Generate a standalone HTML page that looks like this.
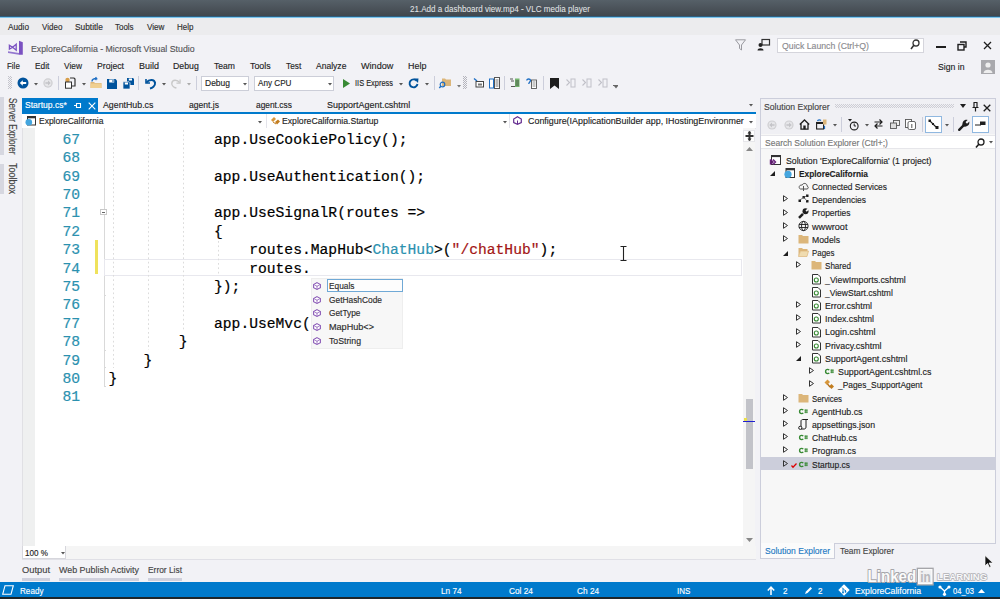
<!DOCTYPE html>
<html><head><meta charset="utf-8"><style>
html,body{margin:0;padding:0;width:1000px;height:599px;overflow:hidden;background:#f2f2f6}
body>div,body>span,body>svg,div>div,div>span{position:absolute}
.t{position:absolute;white-space:pre;font-family:"Liberation Sans",sans-serif;-webkit-text-stroke:0.15px currentColor}
.m{position:absolute;white-space:pre;font-family:"Liberation Mono",monospace;font-size:14.667px;line-height:16px;-webkit-text-stroke:0.2px currentColor}
svg{position:absolute;overflow:visible}
</style></head><body>
<div style="left:0;top:0;width:1000px;height:16px;background:linear-gradient(#566068,#41474d)"></div>
<div style="left:0px;top:16px;width:1000px;height:1px;background:#2f5f80;"></div>
<div style="left:0px;top:17px;width:1000px;height:1px;background:#7cc6ee;"></div>
<div style="left:0px;top:18px;width:1000px;height:17px;background:#ececee;"></div>
<span class="t" style="left:409.60px;top:5px;font-size:8.8px;line-height:8.8px;color:#e2e4e6;transform:scaleX(0.918);transform-origin:0 0;-webkit-text-stroke:0.05px #e2e4e6">21.Add a dashboard view.mp4 - VLC media player</span>
<span class="t" style="left:8.00px;top:23px;font-size:8.6px;line-height:8.6px;color:#2e2e2e;transform:scaleX(0.955);transform-origin:0 0;">Audio</span>
<span class="t" style="left:41.60px;top:23px;font-size:8.6px;line-height:8.6px;color:#2e2e2e;transform:scaleX(0.934);transform-origin:0 0;">Video</span>
<span class="t" style="left:74.60px;top:23px;font-size:8.6px;line-height:8.6px;color:#2e2e2e;transform:scaleX(0.969);transform-origin:0 0;">Subtitle</span>
<span class="t" style="left:115.00px;top:23px;font-size:8.6px;line-height:8.6px;color:#2e2e2e;transform:scaleX(0.927);transform-origin:0 0;">Tools</span>
<span class="t" style="left:146.60px;top:23px;font-size:8.6px;line-height:8.6px;color:#2e2e2e;transform:scaleX(0.940);transform-origin:0 0;">View</span>
<span class="t" style="left:176.60px;top:23px;font-size:8.6px;line-height:8.6px;color:#2e2e2e;transform:scaleX(0.927);transform-origin:0 0;">Help</span>
<div style="left:0px;top:35px;width:1000px;height:547px;background:#f2f2f6;"></div>
<svg style="left:7px;top:40px" width="17" height="16" viewBox="0 0 17 16"><path d="M12 0.8 L15.8 2.2 V14.8 H12 Z" fill="#7b52c2"/><path d="M1 11.2 L12 12.9 V14.8 L1 12.9 Z" fill="#9478d0"/><path d="M2.4 5.2 L5.6 7.2 L2.4 9.2 Z M9.2 4.2 L5.6 7.2 L9.2 10.2 Z" fill="none" stroke="#7b52c2" stroke-width="1.3" stroke-linejoin="miter"/></svg>
<span class="t" style="left:31.40px;top:44px;font-size:9.8px;line-height:9.8px;color:#555558;transform:scaleX(0.895);transform-origin:0 0;">ExploreCalifornia - Microsoft Visual Studio</span>
<svg style="left:735px;top:39px" width="11" height="12" viewBox="0 0 11 12"><path d="M0.5 0.8 H10.5 L6.5 6 V11 L4.5 9.5 V6 Z" fill="none" stroke="#9a9aa0" stroke-width="1"/></svg>
<svg style="left:757px;top:39px" width="13" height="12" viewBox="0 0 13 12"><rect x="5" y="0.5" width="7.5" height="5.5" fill="none" stroke="#333" stroke-width="1.2"/><circle cx="3.5" cy="6" r="2" fill="#222"/><path d="M0.5 11.5 C0.5 8.5 6.5 8.5 6.5 11.5Z" fill="#222"/></svg>
<div style="left:776.5px;top:37.5px;width:147px;height:15.5px;background:#fff;border:1px solid #d5d5dc;box-sizing:border-box"></div>
<span class="t" style="left:782.00px;top:41px;font-size:9.8px;line-height:9.8px;color:#8a8a8e;transform:scaleX(0.890);transform-origin:0 0;">Quick Launch (Ctrl+Q)</span>
<svg style="left:910px;top:39px" width="10" height="11" viewBox="0 0 10 11"><circle cx="6" cy="4" r="3" fill="none" stroke="#333" stroke-width="1.3"/><path d="M4 6 L1 10" stroke="#333" stroke-width="1.6"/></svg>
<div style="left:935.5px;top:46px;width:10px;height:2.2px;background:#1e1e1e;"></div>
<svg style="left:957px;top:41px" width="10" height="10" viewBox="0 0 10 10"><path d="M3 1 H9 V6 H7" fill="none" stroke="#1e1e1e" stroke-width="1.4"/><rect x="1" y="3.5" width="6" height="5.5" fill="none" stroke="#1e1e1e" stroke-width="1.4"/></svg>
<svg style="left:983px;top:41px" width="9" height="9" viewBox="0 0 9 9"><path d="M1 1 L8 8 M8 1 L1 8" stroke="#1e1e1e" stroke-width="1.3"/></svg>
<span class="t" style="left:6.80px;top:61px;font-size:9.8px;line-height:9.8px;color:#1e1e1e;transform:scaleX(0.811);transform-origin:0 0;">File</span>
<span class="t" style="left:34.60px;top:61px;font-size:9.8px;line-height:9.8px;color:#1e1e1e;transform:scaleX(0.853);transform-origin:0 0;">Edit</span>
<span class="t" style="left:64.00px;top:61px;font-size:9.8px;line-height:9.8px;color:#1e1e1e;transform:scaleX(0.854);transform-origin:0 0;">View</span>
<span class="t" style="left:97.00px;top:61px;font-size:9.8px;line-height:9.8px;color:#1e1e1e;transform:scaleX(0.885);transform-origin:0 0;">Project</span>
<span class="t" style="left:139.00px;top:61px;font-size:9.8px;line-height:9.8px;color:#1e1e1e;transform:scaleX(0.918);transform-origin:0 0;">Build</span>
<span class="t" style="left:173.40px;top:61px;font-size:9.8px;line-height:9.8px;color:#1e1e1e;transform:scaleX(0.893);transform-origin:0 0;">Debug</span>
<span class="t" style="left:214.00px;top:61px;font-size:9.8px;line-height:9.8px;color:#1e1e1e;transform:scaleX(0.876);transform-origin:0 0;">Team</span>
<span class="t" style="left:250.40px;top:61px;font-size:9.8px;line-height:9.8px;color:#1e1e1e;transform:scaleX(0.901);transform-origin:0 0;">Tools</span>
<span class="t" style="left:285.80px;top:61px;font-size:9.8px;line-height:9.8px;color:#1e1e1e;transform:scaleX(0.846);transform-origin:0 0;">Test</span>
<span class="t" style="left:315.60px;top:61px;font-size:9.8px;line-height:9.8px;color:#1e1e1e;transform:scaleX(0.872);transform-origin:0 0;">Analyze</span>
<span class="t" style="left:360.60px;top:61px;font-size:9.8px;line-height:9.8px;color:#1e1e1e;transform:scaleX(0.929);transform-origin:0 0;">Window</span>
<span class="t" style="left:407.60px;top:61px;font-size:9.8px;line-height:9.8px;color:#1e1e1e;transform:scaleX(0.913);transform-origin:0 0;">Help</span>
<span class="t" style="left:937.50px;top:62px;font-size:9.8px;line-height:9.8px;color:#1e1e1e;transform:scaleX(0.884);transform-origin:0 0;">Sign in</span>
<svg style="left:981px;top:60px" width="14" height="14" viewBox="0 0 14 14"><rect width="14" height="14" fill="#a9a9ad"/><circle cx="7" cy="5" r="2.6" fill="#eee"/><path d="M2.5 13 C2.5 8.5 11.5 8.5 11.5 13Z" fill="#eee"/></svg>
<svg style="left:8px;top:76px" width="4" height="13" viewBox="0 0 4 13"><path d="M0 0h1v1h-1zM2 0h1v1h-1zM1 1h1v1h-1zM3 1h1v1h-1zM0 2h1v1h-1zM2 2h1v1h-1zM1 3h1v1h-1zM3 3h1v1h-1zM0 4h1v1h-1zM2 4h1v1h-1zM1 5h1v1h-1zM3 5h1v1h-1zM0 6h1v1h-1zM2 6h1v1h-1zM1 7h1v1h-1zM3 7h1v1h-1zM0 8h1v1h-1zM2 8h1v1h-1zM1 9h1v1h-1zM3 9h1v1h-1zM0 10h1v1h-1zM2 10h1v1h-1zM1 11h1v1h-1zM3 11h1v1h-1zM0 12h1v1h-1zM2 12h1v1h-1z" fill="#c4c4cc"/></svg>
<svg style="left:17px;top:77px" width="12" height="12" viewBox="0 0 12 12"><circle cx="6" cy="6" r="5.5" fill="#00539c"/><path d="M2.8 6 L5.8 3.2 V5 H9.2 V7 H5.8 V8.8Z" fill="#fff"/></svg>
<svg style="left:33.5px;top:82.8px" width="4" height="2.4" viewBox="0 0 4 2.4"><path d="M0 0H4L2 2.4Z" fill="#555"/></svg>
<svg style="left:42.5px;top:78px" width="10" height="10" viewBox="0 0 10 10"><circle cx="5" cy="5" r="4.7" fill="#cfcfd2"/><circle cx="5" cy="5" r="3.4" fill="#e6e6e9"/><path d="M7.7 5L5 2.6V4.2H2.4V5.8H5V7.4Z" fill="#c4c4c8"/></svg>
<div style="left:58px;top:76px;width:1px;height:14px;background:#cccedb;"></div>
<svg style="left:64px;top:77px" width="12" height="12" viewBox="0 0 12 12"><circle cx="3.5" cy="3" r="2.2" fill="#d89e4a"/><rect x="1.5" y="5" width="6" height="6.2" fill="#fff" stroke="#333" stroke-width="1"/><path d="M6 1 H10 L11 2 V9 H8" fill="none" stroke="#333" stroke-width="1.2"/></svg>
<svg style="left:81.5px;top:82.8px" width="4" height="2.4" viewBox="0 0 4 2.4"><path d="M0 0H4L2 2.4Z" fill="#555"/></svg>
<svg style="left:90px;top:77px" width="12" height="12" viewBox="0 0 12 12"><path d="M0.5 5 H4 L5 6 H11.5 V11 H0.5Z" fill="#dcb67a"/><path d="M0.5 6.5 H11.5 V11 H0.5Z" fill="#f0cf90"/><path d="M2 4.5 C2 2 4 1.5 6.5 1.5 L5.5 0.2 M6.5 1.5 L5.5 3" fill="none" stroke="#1f6fc4" stroke-width="1.4"/></svg>
<svg style="left:107px;top:78.5px" width="10" height="10" viewBox="0 0 10 10"><path d="M0 0 H8.5 L10 1.5 V10 H0Z" fill="#00539c"/><rect x="2.2" y="0.5" width="5" height="3" fill="#fff"/><rect x="5.5" y="1" width="1" height="2" fill="#00539c"/><rect x="2" y="6.5" width="6" height="3.5" fill="#00539c"/></svg>
<svg style="left:122.5px;top:77.5px" width="11" height="11" viewBox="0 0 11 11"><path d="M4 0 H10 L11 1 V7 H4Z" fill="#00539c"/><rect x="5.8" y="0.5" width="3.2" height="2" fill="#fff"/><path d="M0 3.8 H6 L7 4.8 V11 H0Z" fill="#00539c" stroke="#f2f2f6" stroke-width="0.7"/><rect x="1.8" y="4.5" width="3.2" height="2" fill="#fff"/></svg>
<div style="left:138px;top:76px;width:1px;height:14px;background:#cccedb;"></div>
<svg style="left:144.5px;top:77.5px" width="12" height="11" viewBox="0 0 12 11"><path d="M1 1 V5 H5" fill="none" stroke="#00539c" stroke-width="1.6"/><path d="M1.5 4.5 C4 1 9.5 1 10 5 C10.5 8 7 10 5 10.5" fill="none" stroke="#00539c" stroke-width="2"/></svg>
<svg style="left:161.5px;top:82.8px" width="4" height="2.4" viewBox="0 0 4 2.4"><path d="M0 0H4L2 2.4Z" fill="#555"/></svg>
<svg style="left:170px;top:77.5px" width="11" height="11" viewBox="0 0 12 11"><path d="M11 1 V5 H7" fill="none" stroke="#c8c8c8" stroke-width="1.4"/><path d="M10.5 4.5 C8 1 2.5 1 2 5 C1.5 8 5 10 7 10.5" fill="none" stroke="#c8c8c8" stroke-width="1.6"/></svg>
<svg style="left:186.5px;top:82.8px" width="4" height="2.4" viewBox="0 0 4 2.4"><path d="M0 0H4L2 2.4Z" fill="#aaa"/></svg>
<div style="left:196px;top:76px;width:1px;height:14px;background:#cccedb;"></div>
<div style="left:201.4px;top:75.6px;width:48px;height:15.4px;background:#fff;border:1px solid #ccced8;box-sizing:border-box"></div>
<span class="t" style="left:205.00px;top:78px;font-size:9.8px;line-height:9.8px;color:#1e1e1e;transform:scaleX(0.866);transform-origin:0 0;">Debug</span>
<svg style="left:242.5px;top:82.8px" width="4" height="2.4" viewBox="0 0 4 2.4"><path d="M0 0H4L2 2.4Z" fill="#555"/></svg>
<div style="left:254px;top:75.6px;width:80.4px;height:15.4px;background:#fff;border:1px solid #ccced8;box-sizing:border-box"></div>
<span class="t" style="left:257.50px;top:78px;font-size:9.8px;line-height:9.8px;color:#1e1e1e;transform:scaleX(0.831);transform-origin:0 0;">Any CPU</span>
<svg style="left:327.5px;top:82.8px" width="4" height="2.4" viewBox="0 0 4 2.4"><path d="M0 0H4L2 2.4Z" fill="#555"/></svg>
<svg style="left:342.5px;top:78.5px" width="7" height="9" viewBox="0 0 7 9"><path d="M0 0 L7 4.5 L0 9Z" fill="#388a34"/></svg>
<span class="t" style="left:355.00px;top:78px;font-size:9.8px;line-height:9.8px;color:#1e1e1e;transform:scaleX(0.758);transform-origin:0 0;">IIS Express</span>
<svg style="left:398.5px;top:82.8px" width="4" height="2.4" viewBox="0 0 4 2.4"><path d="M0 0H4L2 2.4Z" fill="#555"/></svg>
<svg style="left:408px;top:77.5px" width="11" height="11" viewBox="0 0 11 11"><path d="M8.8 3 A4 4 0 1 0 9.5 6" fill="none" stroke="#00539c" stroke-width="1.9"/><path d="M6 0.5 L10.5 0.5 L10 5 Z" fill="#00539c"/></svg>
<svg style="left:425.0px;top:82.8px" width="4" height="2.4" viewBox="0 0 4 2.4"><path d="M0 0H4L2 2.4Z" fill="#555"/></svg>
<div style="left:434px;top:76px;width:1px;height:14px;background:#cccedb;"></div>
<svg style="left:439px;top:77px" width="12" height="12" viewBox="0 0 12 12"><path d="M3 1.5 H6 L7 2.5 H12 V9 H3Z" fill="#dcb67a"/><circle cx="3.5" cy="7.5" r="2.3" fill="none" stroke="#1f6fc4" stroke-width="1.2"/><path d="M2 9 L0.3 11" stroke="#1f6fc4" stroke-width="1.4"/></svg>
<svg style="left:456.5px;top:85.3px" width="4" height="2.4" viewBox="0 0 4 2.4"><path d="M0 0H4L2 2.4Z" fill="#777"/></svg>
<svg style="left:463px;top:76px" width="4" height="13" viewBox="0 0 4 13"><path d="M0 0h1v1h-1zM2 0h1v1h-1zM1 1h1v1h-1zM3 1h1v1h-1zM0 2h1v1h-1zM2 2h1v1h-1zM1 3h1v1h-1zM3 3h1v1h-1zM0 4h1v1h-1zM2 4h1v1h-1zM1 5h1v1h-1zM3 5h1v1h-1zM0 6h1v1h-1zM2 6h1v1h-1zM1 7h1v1h-1zM3 7h1v1h-1zM0 8h1v1h-1zM2 8h1v1h-1zM1 9h1v1h-1zM3 9h1v1h-1zM0 10h1v1h-1zM2 10h1v1h-1zM1 11h1v1h-1zM3 11h1v1h-1zM0 12h1v1h-1zM2 12h1v1h-1z" fill="#b4b4bc"/></svg>
<svg style="left:473px;top:78px" width="11" height="10" viewBox="0 0 11 10"><path d="M1 0.5 L4 3" stroke="#1f6fc4" stroke-width="1.4"/><rect x="3" y="3.5" width="7.5" height="5.5" fill="#fff" stroke="#444" stroke-width="1"/><rect x="5" y="5.5" width="4" height="2" fill="#777"/></svg>
<svg style="left:489px;top:77px" width="11" height="12" viewBox="0 0 11 12"><rect x="0.5" y="2" width="4" height="9" fill="#fff" stroke="#1f6fc4" stroke-width="1"/><rect x="5.5" y="0.5" width="5" height="11" fill="#fff" stroke="#555" stroke-width="1"/><path d="M6.5 3H9.5M6.5 5H9.5M6.5 7H9.5M6.5 9H9.5" stroke="#777"/></svg>
<div style="left:504px;top:76px;width:1px;height:14px;background:#cccedb;"></div>
<svg style="left:510px;top:78px" width="10" height="10" viewBox="0 0 10 10"><path d="M0 1H3M1 3H4" stroke="#555"/><rect x="5" y="0.5" width="4.5" height="8.5" fill="#75b66e"/><path d="M5.5 3H9M5.5 5H9M5.5 7H9" stroke="#444" stroke-width="0.8"/><path d="M1 8.5H5" stroke="#555"/></svg>
<svg style="left:526px;top:78px" width="11" height="11" viewBox="0 0 11 11"><path d="M0.8 2.5 C0.8 0.5 4.5 0.5 4.5 2.5 C4.5 4 2.8 4 2.8 6" fill="none" stroke="#1f6fc4" stroke-width="1.3"/><rect x="5.5" y="2" width="5" height="8.5" fill="#fff" stroke="#555" stroke-width="0.9"/><path d="M6.5 4H9.5M6.5 6H9.5M6.5 8H9.5" stroke="#777" stroke-width="0.8"/></svg>
<div style="left:543px;top:76px;width:1px;height:14px;background:#cccedb;"></div>
<svg style="left:550px;top:77.5px" width="9" height="11" viewBox="0 0 9 11"><path d="M0 0H9V11L4.5 7.5L0 11Z" fill="#1e1e1e"/></svg>
<svg style="left:565.5px;top:78px" width="10" height="10" viewBox="0 0 10 10"><path d="M0.5 1.5 L3.5 4.5 L0.5 7.5" fill="none" stroke="#c0c0c8" stroke-width="1.1"/><rect x="5" y="1" width="4" height="8" fill="none" stroke="#c0c0c8" stroke-width="1"/></svg>
<svg style="left:582px;top:78px" width="10" height="10" viewBox="0 0 10 10"><path d="M0.5 1.5 L3.5 4.5 L0.5 7.5" fill="none" stroke="#c0c0c8" stroke-width="1.1"/><rect x="5" y="1" width="4" height="8" fill="none" stroke="#c0c0c8" stroke-width="1"/></svg>
<svg style="left:598px;top:78px" width="10" height="10" viewBox="0 0 10 10"><path d="M0.5 1.5 L3.5 4.5 L0.5 7.5" fill="none" stroke="#c0c0c8" stroke-width="1.1"/><rect x="5" y="1" width="4" height="8" fill="none" stroke="#c0c0c8" stroke-width="1"/></svg>
<svg style="left:613.5px;top:86.3px" width="4" height="2.4" viewBox="0 0 4 2.4"><path d="M0 0H4L2 2.4Z" fill="#666"/></svg>
<div style="left:613px;top:85px;width:5px;height:0.8px;background:#666;"></div>
<div style="left:0px;top:97px;width:3.5px;height:57.5px;background:#d6d7e0;"></div>
<div style="left:0px;top:163.5px;width:3.5px;height:30.5px;background:#d6d7e0;"></div>
<span class="t" style="left:17px;top:97.6px;font-size:10px;line-height:10px;color:#444;transform:rotate(90deg) scaleX(0.813);transform-origin:0 0">Server Explorer</span>
<span class="t" style="left:17px;top:163.4px;font-size:10px;line-height:10px;color:#444;transform:rotate(90deg) scaleX(0.90);transform-origin:0 0">Toolbox</span>
<div style="left:22px;top:98px;width:76.4px;height:15.5px;background:#007acc;"></div>
<div style="left:22px;top:111.5px;width:733.5px;height:2px;background:#007acc;"></div>
<span class="t" style="left:25.00px;top:100px;font-size:9.8px;line-height:9.8px;color:#ffffff;transform:scaleX(0.872);transform-origin:0 0;">Startup.cs*</span>
<svg style="left:73.5px;top:102px" width="8" height="7" viewBox="0 0 8 7"><path d="M0 3.5H2.5M2.5 1V6M2.5 1.5H6.5V5.5H2.5" fill="none" stroke="#fff" stroke-width="1.1"/></svg>
<svg style="left:87.5px;top:101.5px" width="8" height="8" viewBox="0 0 8 8"><path d="M0.7 0.7L7.3 7.3M7.3 0.7L0.7 7.3" stroke="#fff" stroke-width="1.1"/></svg>
<span class="t" style="left:102.60px;top:100px;font-size:9.8px;line-height:9.8px;color:#1e1e1e;transform:scaleX(0.898);transform-origin:0 0;">AgentHub.cs</span>
<span class="t" style="left:189.30px;top:100px;font-size:9.8px;line-height:9.8px;color:#1e1e1e;transform:scaleX(0.874);transform-origin:0 0;">agent.js</span>
<span class="t" style="left:255.60px;top:100px;font-size:9.8px;line-height:9.8px;color:#1e1e1e;transform:scaleX(0.854);transform-origin:0 0;">agent.css</span>
<span class="t" style="left:327.40px;top:100px;font-size:9.8px;line-height:9.8px;color:#1e1e1e;transform:scaleX(0.916);transform-origin:0 0;">SupportAgent.cshtml</span>
<svg style="left:748.5px;top:104.3px" width="4" height="2.4" viewBox="0 0 4 2.4"><path d="M0 0H4L2 2.4Z" fill="#555"/></svg>
<div style="left:22px;top:113.5px;width:733.5px;height:14.5px;background:#ffffff;"></div>
<div style="left:22px;top:127.5px;width:733.5px;height:1px;background:#e3e3ea;"></div>
<svg style="left:25px;top:115.5px" width="11" height="10" viewBox="0 0 11 10"><rect x="2.5" y="0.5" width="8" height="8.5" fill="#fff" stroke="#333" stroke-width="1"/><rect x="2.5" y="0.5" width="8" height="1.8" fill="#333"/><circle cx="3.8" cy="6.3" r="3.3" fill="#44a6df"/></svg>
<span class="t" style="left:38.50px;top:116px;font-size:9.8px;line-height:9.8px;color:#1e1e1e;transform:scaleX(0.864);transform-origin:0 0;">ExploreCalifornia</span>
<svg style="left:258.0px;top:121.3px" width="4" height="2.4" viewBox="0 0 4 2.4"><path d="M0 0H4L2 2.4Z" fill="#555"/></svg>
<div style="left:265.5px;top:113.5px;width:1px;height:14.5px;background:#e3e3ea;"></div>
<svg style="left:270px;top:115.5px" width="11" height="10" viewBox="0 0 11 10"><path d="M1 4 L4 1 L6 3 L3 6Z" fill="#d7973b"/><path d="M5 6 L8 3.5 L10 5.5 L7 8.5Z" fill="#c27d1f"/><path d="M3 6 L6 8" stroke="#c27d1f" stroke-width="1"/></svg>
<span class="t" style="left:282.00px;top:116px;font-size:9.8px;line-height:9.8px;color:#1e1e1e;transform:scaleX(0.885);transform-origin:0 0;">ExploreCalifornia.Startup</span>
<svg style="left:502.5px;top:121.3px" width="4" height="2.4" viewBox="0 0 4 2.4"><path d="M0 0H4L2 2.4Z" fill="#555"/></svg>
<div style="left:509px;top:113.5px;width:1px;height:14.5px;background:#e3e3ea;"></div>
<svg style="left:512.5px;top:116px" width="9" height="9" viewBox="0 0 9 9"><path d="M4.5 0.7 L8.3 3 V6.5 L4.5 8.3 L0.7 6.5 V3Z" fill="#fff" stroke="#652d90" stroke-width="1.2"/><path d="M4.5 4.5 V8" stroke="#652d90"/></svg>
<span class="t" style="left:527.50px;top:116px;font-size:9.8px;line-height:9.8px;color:#1e1e1e;transform:scaleX(0.909);transform-origin:0 0;">Configure(IApplicationBuilder app, IHostingEnvironmer</span>
<svg style="left:749.0px;top:121.3px" width="4" height="2.4" viewBox="0 0 4 2.4"><path d="M0 0H4L2 2.4Z" fill="#555"/></svg>
<div style="left:22px;top:128px;width:721px;height:418px;background:#ffffff;"></div>
<div style="left:22px;top:128px;width:13px;height:418px;background:#eff0f0;"></div>
<div style="left:22px;top:128px;width:1px;height:418px;background:#e0e0e4;"></div>
<div style="left:103.6px;top:128px;width:1px;height:258px;background:#d9d9d9;"></div>
<div style="left:103.6px;top:294.5px;width:2.5px;height:1px;background:#d9d9d9;"></div>
<div style="left:103.6px;top:349.5px;width:2.5px;height:1px;background:#d9d9d9;"></div>
<div style="left:103.6px;top:367px;width:2.5px;height:1px;background:#d9d9d9;"></div>
<div style="left:103.6px;top:385.5px;width:2.5px;height:1px;background:#d9d9d9;"></div>
<div style="left:100px;top:208.7px;width:6.6px;height:6.6px;background:#fff;border:1px solid #c8c8c8;box-sizing:border-box"></div>
<div style="left:101.7px;top:211.6px;width:3.2px;height:0.9px;background:#666;"></div>
<div style="left:95px;top:240px;width:3.2px;height:33.5px;background:#efe25c;"></div>
<div style="left:104px;top:258.6px;width:638px;height:17px;border:1px solid #e8e8ee;box-sizing:border-box"></div>
<div style="left:112.8px;top:130.4px;width:1px;height:237.6px;background-image:linear-gradient(#dcdcdc 50%,transparent 50%);background-size:1px 4.4px"></div>
<div style="left:148.0px;top:130.4px;width:1px;height:219.2px;background-image:linear-gradient(#dcdcdc 50%,transparent 50%);background-size:1px 4.4px"></div>
<div style="left:183.2px;top:130.4px;width:1px;height:200.8px;background-image:linear-gradient(#dcdcdc 50%,transparent 50%);background-size:1px 4.4px"></div>
<div style="left:218.4px;top:240.7px;width:1px;height:35.4px;background-image:linear-gradient(#dcdcdc 50%,transparent 50%);background-size:1px 4.4px"></div>
<span class="m" style="left:62.4px;top:131.90px;color:#2b91af">67</span>
<span class="m" style="left:62.4px;top:150.28px;color:#2b91af">68</span>
<span class="m" style="left:62.4px;top:168.67px;color:#2b91af">69</span>
<span class="m" style="left:62.4px;top:187.06px;color:#2b91af">70</span>
<span class="m" style="left:62.4px;top:205.44px;color:#2b91af">71</span>
<span class="m" style="left:62.4px;top:223.83px;color:#2b91af">72</span>
<span class="m" style="left:62.4px;top:242.21px;color:#2b91af">73</span>
<span class="m" style="left:62.4px;top:260.60px;color:#2b91af">74</span>
<span class="m" style="left:62.4px;top:278.98px;color:#2b91af">75</span>
<span class="m" style="left:62.4px;top:297.37px;color:#2b91af">76</span>
<span class="m" style="left:62.4px;top:315.75px;color:#2b91af">77</span>
<span class="m" style="left:62.4px;top:334.13px;color:#2b91af">78</span>
<span class="m" style="left:62.4px;top:352.52px;color:#2b91af">79</span>
<span class="m" style="left:62.4px;top:370.91px;color:#2b91af">80</span>
<span class="m" style="left:62.4px;top:389.29px;color:#2b91af">81</span>
<span class="m" style="left:214.00px;top:131.90px;color:#000">app.UseCookiePolicy();</span>
<span class="m" style="left:214.00px;top:168.67px;color:#000">app.UseAuthentication();</span>
<span class="m" style="left:214.00px;top:205.44px;color:#000">app.UseSignalR(routes =&gt;</span>
<span class="m" style="left:214.00px;top:223.83px;color:#000">{</span>
<span class="m" style="left:249.20px;top:242.21px;color:#000">routes.MapHub&lt;</span>
<span class="m" style="left:372.40px;top:242.21px;color:#2b91af">ChatHub</span>
<span class="m" style="left:434.00px;top:242.21px;color:#000">&gt;(</span>
<span class="m" style="left:451.60px;top:242.21px;color:#a31515">"/chatHub"</span>
<span class="m" style="left:539.60px;top:242.21px;color:#000">);</span>
<span class="m" style="left:249.20px;top:260.60px;color:#000">routes.</span>
<span class="m" style="left:214.00px;top:278.98px;color:#000">});</span>
<span class="m" style="left:214.00px;top:315.75px;color:#000">app.UseMvc(</span>
<span class="m" style="left:178.80px;top:334.13px;color:#000">}</span>
<span class="m" style="left:143.60px;top:352.52px;color:#000">}</span>
<span class="m" style="left:108.40px;top:370.91px;color:#000">}</span>
<svg style="left:620px;top:246px" width="7" height="15" viewBox="0 0 7 15"><path d="M0.5 0.5H6.5M3.5 0.5V14.5M0.5 14.5H6.5" stroke="#222" stroke-width="1.1"/></svg>
<div style="left:311.3px;top:278.3px;width:91.6px;height:70.5px;background:#f7f7f7;border:1px solid #eeeeee;box-sizing:border-box"></div>
<div style="left:326.7px;top:278.6px;width:75.9px;height:13.9px;background:#fdfdfd;border:1px solid #70a9d6;box-sizing:border-box"></div>
<svg style="left:313px;top:281.6px" width="8" height="8" viewBox="0 0 9 9"><path d="M4.5 0.7 L8.3 3 V6.5 L4.5 8.3 L0.7 6.5 V3Z" fill="#fff" stroke="#8756b5" stroke-width="1.2"/><path d="M4.5 4.2 V8 M1.5 3.3 L4.5 4.8 L7.5 3.3" fill="none" stroke="#8756b5" stroke-width="0.8"/></svg>
<svg style="left:313px;top:295.5px" width="8" height="8" viewBox="0 0 9 9"><path d="M4.5 0.7 L8.3 3 V6.5 L4.5 8.3 L0.7 6.5 V3Z" fill="#fff" stroke="#8756b5" stroke-width="1.2"/><path d="M4.5 4.2 V8 M1.5 3.3 L4.5 4.8 L7.5 3.3" fill="none" stroke="#8756b5" stroke-width="0.8"/></svg>
<svg style="left:313px;top:309.3px" width="8" height="8" viewBox="0 0 9 9"><path d="M4.5 0.7 L8.3 3 V6.5 L4.5 8.3 L0.7 6.5 V3Z" fill="#fff" stroke="#8756b5" stroke-width="1.2"/><path d="M4.5 4.2 V8 M1.5 3.3 L4.5 4.8 L7.5 3.3" fill="none" stroke="#8756b5" stroke-width="0.8"/></svg>
<svg style="left:313px;top:323.2px" width="8" height="8" viewBox="0 0 9 9"><path d="M4.5 0.7 L8.3 3 V6.5 L4.5 8.3 L0.7 6.5 V3Z" fill="#fff" stroke="#8756b5" stroke-width="1.2"/><path d="M4.5 4.2 V8 M1.5 3.3 L4.5 4.8 L7.5 3.3" fill="none" stroke="#8756b5" stroke-width="0.8"/></svg>
<svg style="left:313px;top:337.0px" width="8" height="8" viewBox="0 0 9 9"><path d="M4.5 0.7 L8.3 3 V6.5 L4.5 8.3 L0.7 6.5 V3Z" fill="#fff" stroke="#8756b5" stroke-width="1.2"/><path d="M4.5 4.2 V8 M1.5 3.3 L4.5 4.8 L7.5 3.3" fill="none" stroke="#8756b5" stroke-width="0.8"/></svg>
<span class="t" style="left:328.50px;top:281px;font-size:9.6px;line-height:9.6px;color:#2a2a2a;transform:scaleX(0.869);transform-origin:0 0;">Equals</span>
<span class="t" style="left:328.50px;top:295px;font-size:9.6px;line-height:9.6px;color:#2a2a2a;transform:scaleX(0.871);transform-origin:0 0;">GetHashCode</span>
<span class="t" style="left:328.50px;top:308px;font-size:9.6px;line-height:9.6px;color:#2a2a2a;transform:scaleX(0.868);transform-origin:0 0;">GetType</span>
<span class="t" style="left:328.50px;top:322px;font-size:9.6px;line-height:9.6px;color:#2a2a2a;transform:scaleX(0.947);transform-origin:0 0;">MapHub&lt;&gt;</span>
<span class="t" style="left:328.50px;top:336px;font-size:9.6px;line-height:9.6px;color:#2a2a2a;transform:scaleX(0.909);transform-origin:0 0;">ToString</span>
<div style="left:743px;top:128px;width:12px;height:418px;background:#f5f5f5;"></div>
<div style="left:743px;top:129.5px;width:12px;height:12px;background:#fff;border:1px solid #e6e6ea;box-sizing:border-box"></div>
<svg style="left:744.5px;top:130.5px" width="9" height="10" viewBox="0 0 9 10"><path d="M4.5 0.5V9.5M0.5 5H8.5" stroke="#333" stroke-width="2"/><path d="M2.5 2.5L4.5 0L6.5 2.5ZM2.5 7.5L4.5 10L6.5 7.5Z" fill="#333"/></svg>
<svg style="left:745.5px;top:146.5px" width="7" height="4" viewBox="0 0 7 4"><path d="M0 4L3.5 0L7 4Z" fill="#888"/></svg>
<div style="left:745.5px;top:399px;width:7px;height:70px;background:#c2c3c9;"></div>
<div style="left:742.5px;top:420.5px;width:12px;height:1.5px;background:#1f1fd0;"></div>
<div style="left:744px;top:418px;width:2.5px;height:3px;background:#ece04a;"></div>
<svg style="left:745.5px;top:538px" width="7" height="4" viewBox="0 0 7 4"><path d="M0 0L3.5 4L7 0Z" fill="#888"/></svg>
<div style="left:760.2px;top:98px;width:235.5px;height:446px;background:#f7f7f7;border:1px solid #cccedb;box-sizing:border-box"></div>
<div style="left:761px;top:99px;width:234px;height:35px;background:#f0f0f4;"></div>
<span class="t" style="left:764.00px;top:102px;font-size:9.8px;line-height:9.8px;color:#444;transform:scaleX(0.879);transform-origin:0 0;">Solution Explorer</span>
<svg style="left:835px;top:104px" width="119" height="4" viewBox="0 0 119 4"><path d="M0 0h1v1h-1zM2 0h1v1h-1zM4 0h1v1h-1zM6 0h1v1h-1zM8 0h1v1h-1zM10 0h1v1h-1zM12 0h1v1h-1zM14 0h1v1h-1zM16 0h1v1h-1zM18 0h1v1h-1zM20 0h1v1h-1zM22 0h1v1h-1zM24 0h1v1h-1zM26 0h1v1h-1zM28 0h1v1h-1zM30 0h1v1h-1zM32 0h1v1h-1zM34 0h1v1h-1zM36 0h1v1h-1zM38 0h1v1h-1zM40 0h1v1h-1zM42 0h1v1h-1zM44 0h1v1h-1zM46 0h1v1h-1zM48 0h1v1h-1zM50 0h1v1h-1zM52 0h1v1h-1zM54 0h1v1h-1zM56 0h1v1h-1zM58 0h1v1h-1zM60 0h1v1h-1zM62 0h1v1h-1zM64 0h1v1h-1zM66 0h1v1h-1zM68 0h1v1h-1zM70 0h1v1h-1zM72 0h1v1h-1zM74 0h1v1h-1zM76 0h1v1h-1zM78 0h1v1h-1zM80 0h1v1h-1zM82 0h1v1h-1zM84 0h1v1h-1zM86 0h1v1h-1zM88 0h1v1h-1zM90 0h1v1h-1zM92 0h1v1h-1zM94 0h1v1h-1zM96 0h1v1h-1zM98 0h1v1h-1zM100 0h1v1h-1zM102 0h1v1h-1zM104 0h1v1h-1zM106 0h1v1h-1zM108 0h1v1h-1zM110 0h1v1h-1zM112 0h1v1h-1zM114 0h1v1h-1zM116 0h1v1h-1zM118 0h1v1h-1zM1 1h1v1h-1zM3 1h1v1h-1zM5 1h1v1h-1zM7 1h1v1h-1zM9 1h1v1h-1zM11 1h1v1h-1zM13 1h1v1h-1zM15 1h1v1h-1zM17 1h1v1h-1zM19 1h1v1h-1zM21 1h1v1h-1zM23 1h1v1h-1zM25 1h1v1h-1zM27 1h1v1h-1zM29 1h1v1h-1zM31 1h1v1h-1zM33 1h1v1h-1zM35 1h1v1h-1zM37 1h1v1h-1zM39 1h1v1h-1zM41 1h1v1h-1zM43 1h1v1h-1zM45 1h1v1h-1zM47 1h1v1h-1zM49 1h1v1h-1zM51 1h1v1h-1zM53 1h1v1h-1zM55 1h1v1h-1zM57 1h1v1h-1zM59 1h1v1h-1zM61 1h1v1h-1zM63 1h1v1h-1zM65 1h1v1h-1zM67 1h1v1h-1zM69 1h1v1h-1zM71 1h1v1h-1zM73 1h1v1h-1zM75 1h1v1h-1zM77 1h1v1h-1zM79 1h1v1h-1zM81 1h1v1h-1zM83 1h1v1h-1zM85 1h1v1h-1zM87 1h1v1h-1zM89 1h1v1h-1zM91 1h1v1h-1zM93 1h1v1h-1zM95 1h1v1h-1zM97 1h1v1h-1zM99 1h1v1h-1zM101 1h1v1h-1zM103 1h1v1h-1zM105 1h1v1h-1zM107 1h1v1h-1zM109 1h1v1h-1zM111 1h1v1h-1zM113 1h1v1h-1zM115 1h1v1h-1zM117 1h1v1h-1zM0 2h1v1h-1zM2 2h1v1h-1zM4 2h1v1h-1zM6 2h1v1h-1zM8 2h1v1h-1zM10 2h1v1h-1zM12 2h1v1h-1zM14 2h1v1h-1zM16 2h1v1h-1zM18 2h1v1h-1zM20 2h1v1h-1zM22 2h1v1h-1zM24 2h1v1h-1zM26 2h1v1h-1zM28 2h1v1h-1zM30 2h1v1h-1zM32 2h1v1h-1zM34 2h1v1h-1zM36 2h1v1h-1zM38 2h1v1h-1zM40 2h1v1h-1zM42 2h1v1h-1zM44 2h1v1h-1zM46 2h1v1h-1zM48 2h1v1h-1zM50 2h1v1h-1zM52 2h1v1h-1zM54 2h1v1h-1zM56 2h1v1h-1zM58 2h1v1h-1zM60 2h1v1h-1zM62 2h1v1h-1zM64 2h1v1h-1zM66 2h1v1h-1zM68 2h1v1h-1zM70 2h1v1h-1zM72 2h1v1h-1zM74 2h1v1h-1zM76 2h1v1h-1zM78 2h1v1h-1zM80 2h1v1h-1zM82 2h1v1h-1zM84 2h1v1h-1zM86 2h1v1h-1zM88 2h1v1h-1zM90 2h1v1h-1zM92 2h1v1h-1zM94 2h1v1h-1zM96 2h1v1h-1zM98 2h1v1h-1zM100 2h1v1h-1zM102 2h1v1h-1zM104 2h1v1h-1zM106 2h1v1h-1zM108 2h1v1h-1zM110 2h1v1h-1zM112 2h1v1h-1zM114 2h1v1h-1zM116 2h1v1h-1zM118 2h1v1h-1zM1 3h1v1h-1zM3 3h1v1h-1zM5 3h1v1h-1zM7 3h1v1h-1zM9 3h1v1h-1zM11 3h1v1h-1zM13 3h1v1h-1zM15 3h1v1h-1zM17 3h1v1h-1zM19 3h1v1h-1zM21 3h1v1h-1zM23 3h1v1h-1zM25 3h1v1h-1zM27 3h1v1h-1zM29 3h1v1h-1zM31 3h1v1h-1zM33 3h1v1h-1zM35 3h1v1h-1zM37 3h1v1h-1zM39 3h1v1h-1zM41 3h1v1h-1zM43 3h1v1h-1zM45 3h1v1h-1zM47 3h1v1h-1zM49 3h1v1h-1zM51 3h1v1h-1zM53 3h1v1h-1zM55 3h1v1h-1zM57 3h1v1h-1zM59 3h1v1h-1zM61 3h1v1h-1zM63 3h1v1h-1zM65 3h1v1h-1zM67 3h1v1h-1zM69 3h1v1h-1zM71 3h1v1h-1zM73 3h1v1h-1zM75 3h1v1h-1zM77 3h1v1h-1zM79 3h1v1h-1zM81 3h1v1h-1zM83 3h1v1h-1zM85 3h1v1h-1zM87 3h1v1h-1zM89 3h1v1h-1zM91 3h1v1h-1zM93 3h1v1h-1zM95 3h1v1h-1zM97 3h1v1h-1zM99 3h1v1h-1zM101 3h1v1h-1zM103 3h1v1h-1zM105 3h1v1h-1zM107 3h1v1h-1zM109 3h1v1h-1zM111 3h1v1h-1zM113 3h1v1h-1zM115 3h1v1h-1zM117 3h1v1h-1z" fill="#cdcdd4"/></svg>
<svg style="left:960px;top:104px" width="6" height="4" viewBox="0 0 6 4"><path d="M0 0H6L3 4Z" fill="#1e1e1e"/></svg>
<svg style="left:972px;top:101.5px" width="7" height="10" viewBox="0 0 7 10"><path d="M1.5 0.5H5.5M2 0.5V5.5H5V0.5M0.5 5.5H6.5M3.5 5.5V9.5" fill="none" stroke="#1e1e1e" stroke-width="1.2"/></svg>
<svg style="left:983px;top:103.5px" width="8" height="8" viewBox="0 0 8 8"><path d="M0.7 0.7L7.3 7.3M7.3 0.7L0.7 7.3" stroke="#1e1e1e" stroke-width="1.3"/></svg>
<svg style="left:767px;top:120px" width="10" height="10" viewBox="0 0 10 10"><circle cx="5" cy="5" r="4.6" fill="#cfcfd2"/><circle cx="5" cy="5" r="3.4" fill="#e6e6e9"/><path d="M2.3 5L5 2.6V4.2H7.6V5.8H5V7.4Z" fill="#c4c4c8"/></svg>
<svg style="left:783.5px;top:120px" width="10" height="10" viewBox="0 0 10 10"><circle cx="5" cy="5" r="4.6" fill="#cfcfd2"/><circle cx="5" cy="5" r="3.4" fill="#e6e6e9"/><path d="M7.7 5L5 2.6V4.2H2.4V5.8H5V7.4Z" fill="#c4c4c8"/></svg>
<svg style="left:799px;top:119px" width="11" height="11" viewBox="0 0 11 11"><path d="M0.8 5.5L5.5 1L10.2 5.5M2 4.5V10.2H9V4.5" fill="none" stroke="#1e1e1e" stroke-width="1.3"/><rect x="4.3" y="6.5" width="2.4" height="3.7" fill="#1e1e1e"/></svg>
<svg style="left:816px;top:119px" width="11" height="11" viewBox="0 0 11 11"><rect x="0.6" y="3.5" width="7" height="6.5" fill="none" stroke="#1e1e1e" stroke-width="1.1"/><rect x="0.6" y="3.5" width="7" height="1.5" fill="#1e1e1e"/><rect x="7" y="0.5" width="3.5" height="5" fill="#dcb67a"/><path d="M8.5 7V10M1.5 2C2 0.5 4 0.5 5 1.5" fill="none" stroke="#1f6fc4" stroke-width="1.2"/></svg>
<svg style="left:832.5px;top:123.8px" width="4" height="2.4" viewBox="0 0 4 2.4"><path d="M0 0H4L2 2.4Z" fill="#555"/></svg>
<div style="left:840.5px;top:117px;width:1px;height:15px;background:#cccedb;"></div>
<svg style="left:848px;top:118.5px" width="11" height="12" viewBox="0 0 11 12"><path d="M0 0H4L2 2.5Z" fill="#1e1e1e"/><circle cx="6.2" cy="7" r="3.9" fill="none" stroke="#1e1e1e" stroke-width="1.1"/><path d="M6.2 4.5V7H8" fill="none" stroke="#1e1e1e" stroke-width="1"/></svg>
<svg style="left:864.5px;top:123.8px" width="4" height="2.4" viewBox="0 0 4 2.4"><path d="M0 0H4L2 2.4Z" fill="#555"/></svg>
<svg style="left:873.5px;top:119px" width="9" height="10" viewBox="0 0 9 10"><path d="M0.5 3H8M5.5 0.5L8 3L5.5 5.5M8.5 7H1M3.5 4.5L1 7L3.5 9.5" fill="none" stroke="#1e1e1e" stroke-width="1.2"/></svg>
<svg style="left:890px;top:119.5px" width="10" height="9" viewBox="0 0 10 9"><rect x="3.5" y="0.5" width="6" height="5" fill="#eee" stroke="#555" stroke-width="0.9"/><rect x="0.5" y="3" width="6" height="5.5" fill="#ddd" stroke="#555" stroke-width="0.9"/></svg>
<svg style="left:905px;top:119px" width="11" height="11" viewBox="0 0 11 11"><rect x="0.5" y="0.5" width="6" height="8" fill="#fff" stroke="#555" stroke-width="0.9"/><rect x="3" y="2.5" width="7.5" height="8" rx="1.5" fill="#fff" stroke="#555" stroke-width="0.9"/><path d="M6.8 5V9" stroke="#555"/></svg>
<div style="left:921.5px;top:117px;width:1px;height:15px;background:#cccedb;"></div>
<div style="left:925px;top:116px;width:16.5px;height:16.5px;background:#fff;border:1px solid #90b8e0;box-sizing:border-box"></div>
<svg style="left:928px;top:119px" width="11" height="11" viewBox="0 0 11 11"><rect x="0.5" y="0.5" width="2.5" height="2.5" fill="#1e1e1e"/><rect x="7.5" y="7" width="3" height="3" fill="#1e1e1e"/><path d="M2 2L8 8" stroke="#1e1e1e" stroke-width="1.1"/><rect x="4" y="4" width="2" height="2" fill="#1e1e1e"/></svg>
<svg style="left:944.5px;top:123.8px" width="4" height="2.4" viewBox="0 0 4 2.4"><path d="M0 0H4L2 2.4Z" fill="#555"/></svg>
<div style="left:952.5px;top:117px;width:1px;height:15px;background:#cccedb;"></div>
<svg style="left:958px;top:118.5px" width="12" height="12" viewBox="0 0 12 12"><path d="M1.2 10.8L5.8 6.2" stroke="#1e1e1e" stroke-width="2.4" stroke-linecap="round"/><path d="M4.8 7.2 C3.8 5 4.5 2 7 1 C8 0.6 9 0.7 9.6 0.9 L7.6 2.9 L8.2 4.2 L9.4 4.6 L11.3 2.6 C11.6 4 11.2 5.6 10 6.6 C8.6 7.8 6.6 7.9 4.8 7.2Z" fill="#1e1e1e"/></svg>
<div style="left:972px;top:116px;width:16.5px;height:17px;background:#fff;border:1px solid #90b8e0;box-sizing:border-box"></div>
<svg style="left:975px;top:121px" width="11" height="5" viewBox="0 0 11 5"><rect x="5" y="0.5" width="5.5" height="3.5" fill="#1e1e1e"/><path d="M0 4H6" stroke="#1e1e1e" stroke-width="1"/></svg>
<div style="left:761px;top:134.8px;width:234px;height:14.6px;background:#fff;border-top:1px solid #e6e6ea;border-bottom:1px solid #e6e6ea;box-sizing:border-box"></div>
<span class="t" style="left:765.00px;top:138px;font-size:9.8px;line-height:9.8px;color:#777;transform:scaleX(0.870);transform-origin:0 0;">Search Solution Explorer (Ctrl+;)</span>
<svg style="left:975px;top:137.5px" width="10" height="10" viewBox="0 0 10 10"><circle cx="6" cy="4" r="3" fill="none" stroke="#1e1e1e" stroke-width="1.3"/><path d="M4 6L1 9.5" stroke="#1e1e1e" stroke-width="1.6"/></svg>
<svg style="left:988.5px;top:141.3px" width="4" height="2.4" viewBox="0 0 4 2.4"><path d="M0 0H4L2 2.4Z" fill="#555"/></svg>
<div style="left:761px;top:150px;width:234px;height:393px;background:#f7f7f7;"></div>
<div style="left:761px;top:457.2px;width:234px;height:13.3px;background:#cccedb;"></div>
<svg style="left:770px;top:154.6px" width="11" height="11" viewBox="0 0 11 11"><rect x="1.5" y="0.5" width="9" height="9" fill="#fff" stroke="#333" stroke-width="1"/><rect x="1.5" y="0.5" width="9" height="1.6" fill="#333"/><path d="M0.5 4.5L3 7L0.5 9.5M3 4.5L5.5 7L3 9.5M0.5 4.5V9.5" fill="none" stroke="#68217a" stroke-width="1.4"/></svg>
<span class="t" style="left:785.50px;top:156px;font-size:9.8px;line-height:9.8px;color:#1e1e1e;transform:scaleX(0.891);transform-origin:0 0;">Solution 'ExploreCalifornia' (1 project)</span>
<svg style="left:769.5px;top:171.3px" width="5" height="5" viewBox="0 0 5 5"><path d="M5 0V5H0Z" fill="#1e1e1e"/></svg>
<svg style="left:784.0px;top:167.8px" width="11" height="11" viewBox="0 0 11 11"><rect x="2" y="0.5" width="8.5" height="9" fill="#fff" stroke="#333" stroke-width="1"/><rect x="2" y="0.5" width="8.5" height="1.8" fill="#333"/><circle cx="4" cy="6.3" r="3.6" fill="#44a6df"/></svg>
<span class="t" style="left:798.50px;top:169px;font-size:9.8px;line-height:9.8px;color:#1e1e1e;font-weight:bold;transform:scaleX(0.850);transform-origin:0 0;">ExploreCalifornia</span>
<svg style="left:797.5px;top:181.0px" width="11" height="11" viewBox="0 0 11 11"><path d="M2.5 8H9C10.5 8 10.8 5.5 9.2 5.2C9.2 2 5 1.5 4.3 4C2 3.8 1 5 1.2 6.5C1.5 7.6 2 8 2.5 8Z" fill="none" stroke="#555" stroke-width="1"/><path d="M5.5 5V10" stroke="#555" stroke-width="1"/></svg>
<span class="t" style="left:812.00px;top:182px;font-size:9.8px;line-height:9.8px;color:#1e1e1e;transform:scaleX(0.855);transform-origin:0 0;">Connected Services</span>
<svg style="left:782.5px;top:195.3px" width="5" height="7" viewBox="0 0 5 7"><path d="M0.5 0.7L4.5 3.5L0.5 6.3Z" fill="none" stroke="#333" stroke-width="1"/></svg>
<svg style="left:797.5px;top:194.3px" width="11" height="11" viewBox="0 0 11 11"><rect x="0.5" y="5.5" width="2.5" height="2.5" fill="#1e1e1e"/><rect x="4.5" y="2" width="2.5" height="2.5" fill="#1e1e1e"/><rect x="8" y="0.5" width="2.5" height="2.5" fill="#1e1e1e"/><rect x="8" y="6" width="2.5" height="2.5" fill="#1e1e1e"/><path d="M2 6L5.5 3.5M6 3L9 2M6 3.5L9 7" stroke="#555" stroke-width="0.8"/></svg>
<span class="t" style="left:812.00px;top:195px;font-size:9.8px;line-height:9.8px;color:#1e1e1e;transform:scaleX(0.862);transform-origin:0 0;">Dependencies</span>
<svg style="left:782.5px;top:208.5px" width="5" height="7" viewBox="0 0 5 7"><path d="M0.5 0.7L4.5 3.5L0.5 6.3Z" fill="none" stroke="#333" stroke-width="1"/></svg>
<svg style="left:797.5px;top:207.5px" width="11" height="11" viewBox="0 0 11 11"><path d="M1 9.8L5 5.8" stroke="#1e1e1e" stroke-width="2.4"/><circle cx="7.5" cy="3.3" r="3" fill="#1e1e1e"/><path d="M7.5 2.6L9.6 0.5L10.8 1.7L8.7 3.8Z" fill="#f7f7f7"/></svg>
<span class="t" style="left:812.00px;top:208px;font-size:9.8px;line-height:9.8px;color:#1e1e1e;transform:scaleX(0.862);transform-origin:0 0;">Properties</span>
<svg style="left:782.5px;top:221.7px" width="5" height="7" viewBox="0 0 5 7"><path d="M0.5 0.7L4.5 3.5L0.5 6.3Z" fill="none" stroke="#333" stroke-width="1"/></svg>
<svg style="left:797.5px;top:220.7px" width="11" height="11" viewBox="0 0 11 11"><circle cx="5.5" cy="5" r="4.6" fill="none" stroke="#1e1e1e" stroke-width="0.9"/><ellipse cx="5.5" cy="5" rx="2" ry="4.6" fill="none" stroke="#1e1e1e" stroke-width="0.9"/><path d="M1 3.5H10M1 6.5H10" stroke="#1e1e1e" stroke-width="0.9"/></svg>
<span class="t" style="left:812.02px;top:222px;font-size:9.8px;line-height:9.8px;color:#1e1e1e;transform:scaleX(0.931);transform-origin:0 0;">wwwroot</span>
<svg style="left:782.5px;top:234.9px" width="5" height="7" viewBox="0 0 5 7"><path d="M0.5 0.7L4.5 3.5L0.5 6.3Z" fill="none" stroke="#333" stroke-width="1"/></svg>
<svg style="left:797.5px;top:233.9px" width="11" height="11" viewBox="0 0 11 11"><path d="M0.5 1H4L5 2H10.5V9.5H0.5Z" fill="#dcb67a"/></svg>
<span class="t" style="left:812.00px;top:235px;font-size:9.8px;line-height:9.8px;color:#1e1e1e;transform:scaleX(0.886);transform-origin:0 0;">Models</span>
<svg style="left:783.0px;top:250.6px" width="5" height="5" viewBox="0 0 5 5"><path d="M5 0V5H0Z" fill="#1e1e1e"/></svg>
<svg style="left:797.5px;top:247.1px" width="11" height="11" viewBox="0 0 11 11"><path d="M0.5 1H4L5 2H9.5V4H2.5L0.5 9.5Z" fill="#dcb67a"/><path d="M2.5 4H10.5L9 9.5H0.5Z" fill="#f0dcb0" stroke="#dcb67a" stroke-width="0.7"/></svg>
<span class="t" style="left:812.00px;top:248px;font-size:9.8px;line-height:9.8px;color:#1e1e1e;transform:scaleX(0.810);transform-origin:0 0;">Pages</span>
<svg style="left:795.5px;top:261.4px" width="5" height="7" viewBox="0 0 5 7"><path d="M0.5 0.7L4.5 3.5L0.5 6.3Z" fill="none" stroke="#333" stroke-width="1"/></svg>
<svg style="left:810.5px;top:260.4px" width="11" height="11" viewBox="0 0 11 11"><path d="M0.5 1H4L5 2H10.5V9.5H0.5Z" fill="#dcb67a"/></svg>
<span class="t" style="left:825.00px;top:261px;font-size:9.8px;line-height:9.8px;color:#1e1e1e;transform:scaleX(0.823);transform-origin:0 0;">Shared</span>
<svg style="left:810.5px;top:273.6px" width="11" height="11" viewBox="0 0 11 11"><path d="M1.5 0.5H7L9.5 3V10H1.5Z" fill="#fff" stroke="#333" stroke-width="1"/><circle cx="5.3" cy="6" r="2" fill="none" stroke="#388a34" stroke-width="1.1"/></svg>
<span class="t" style="left:825.14px;top:275px;font-size:9.8px;line-height:9.8px;color:#1e1e1e;transform:scaleX(0.896);transform-origin:0 0;">_ViewImports.cshtml</span>
<svg style="left:810.5px;top:286.8px" width="11" height="11" viewBox="0 0 11 11"><path d="M1.5 0.5H7L9.5 3V10H1.5Z" fill="#fff" stroke="#333" stroke-width="1"/><circle cx="5.3" cy="6" r="2" fill="none" stroke="#388a34" stroke-width="1.1"/></svg>
<span class="t" style="left:825.14px;top:288px;font-size:9.8px;line-height:9.8px;color:#1e1e1e;transform:scaleX(0.867);transform-origin:0 0;">_ViewStart.cshtml</span>
<svg style="left:795.5px;top:301.0px" width="5" height="7" viewBox="0 0 5 7"><path d="M0.5 0.7L4.5 3.5L0.5 6.3Z" fill="none" stroke="#333" stroke-width="1"/></svg>
<svg style="left:810.5px;top:300.0px" width="11" height="11" viewBox="0 0 11 11"><path d="M1.5 0.5H7L9.5 3V10H1.5Z" fill="#fff" stroke="#333" stroke-width="1"/><circle cx="5.3" cy="6" r="2" fill="none" stroke="#388a34" stroke-width="1.1"/></svg>
<span class="t" style="left:825.00px;top:301px;font-size:9.8px;line-height:9.8px;color:#1e1e1e;transform:scaleX(0.899);transform-origin:0 0;">Error.cshtml</span>
<svg style="left:795.5px;top:314.2px" width="5" height="7" viewBox="0 0 5 7"><path d="M0.5 0.7L4.5 3.5L0.5 6.3Z" fill="none" stroke="#333" stroke-width="1"/></svg>
<svg style="left:810.5px;top:313.2px" width="11" height="11" viewBox="0 0 11 11"><path d="M1.5 0.5H7L9.5 3V10H1.5Z" fill="#fff" stroke="#333" stroke-width="1"/><circle cx="5.3" cy="6" r="2" fill="none" stroke="#388a34" stroke-width="1.1"/></svg>
<span class="t" style="left:825.00px;top:314px;font-size:9.8px;line-height:9.8px;color:#1e1e1e;transform:scaleX(0.891);transform-origin:0 0;">Index.cshtml</span>
<svg style="left:795.5px;top:327.5px" width="5" height="7" viewBox="0 0 5 7"><path d="M0.5 0.7L4.5 3.5L0.5 6.3Z" fill="none" stroke="#333" stroke-width="1"/></svg>
<svg style="left:810.5px;top:326.5px" width="11" height="11" viewBox="0 0 11 11"><path d="M1.5 0.5H7L9.5 3V10H1.5Z" fill="#fff" stroke="#333" stroke-width="1"/><circle cx="5.3" cy="6" r="2" fill="none" stroke="#388a34" stroke-width="1.1"/></svg>
<span class="t" style="left:825.00px;top:327px;font-size:9.8px;line-height:9.8px;color:#1e1e1e;transform:scaleX(0.918);transform-origin:0 0;">Login.cshtml</span>
<svg style="left:795.5px;top:340.7px" width="5" height="7" viewBox="0 0 5 7"><path d="M0.5 0.7L4.5 3.5L0.5 6.3Z" fill="none" stroke="#333" stroke-width="1"/></svg>
<svg style="left:810.5px;top:339.7px" width="11" height="11" viewBox="0 0 11 11"><path d="M1.5 0.5H7L9.5 3V10H1.5Z" fill="#fff" stroke="#333" stroke-width="1"/><circle cx="5.3" cy="6" r="2" fill="none" stroke="#388a34" stroke-width="1.1"/></svg>
<span class="t" style="left:825.00px;top:341px;font-size:9.8px;line-height:9.8px;color:#1e1e1e;transform:scaleX(0.905);transform-origin:0 0;">Privacy.cshtml</span>
<svg style="left:796.0px;top:356.4px" width="5" height="5" viewBox="0 0 5 5"><path d="M5 0V5H0Z" fill="#1e1e1e"/></svg>
<svg style="left:810.5px;top:352.9px" width="11" height="11" viewBox="0 0 11 11"><path d="M1.5 0.5H7L9.5 3V10H1.5Z" fill="#fff" stroke="#333" stroke-width="1"/><circle cx="5.3" cy="6" r="2" fill="none" stroke="#388a34" stroke-width="1.1"/></svg>
<span class="t" style="left:825.00px;top:354px;font-size:9.8px;line-height:9.8px;color:#1e1e1e;transform:scaleX(0.907);transform-origin:0 0;">SupportAgent.cshtml</span>
<svg style="left:808.5px;top:367.1px" width="5" height="7" viewBox="0 0 5 7"><path d="M0.5 0.7L4.5 3.5L0.5 6.3Z" fill="none" stroke="#333" stroke-width="1"/></svg>
<svg style="left:823.5px;top:366.1px" width="11" height="11" viewBox="0 0 11 11"><path d="M5.2 4.2C4.8 3.6 4.3 3.4 3.6 3.4C2.5 3.4 1.6 4.3 1.6 5.5C1.6 6.7 2.5 7.6 3.6 7.6C4.3 7.6 4.8 7.4 5.2 6.8" fill="none" stroke="#388a34" stroke-width="1.4"/><path d="M6.6 4.2H9.6M6.6 6.2H9.6M7.3 3.4V7.2M8.9 3.4V7.2" stroke="#388a34" stroke-width="0.9"/></svg>
<span class="t" style="left:838.00px;top:367px;font-size:9.8px;line-height:9.8px;color:#1e1e1e;transform:scaleX(0.903);transform-origin:0 0;">SupportAgent.cshtml.cs</span>
<svg style="left:808.5px;top:380.3px" width="5" height="7" viewBox="0 0 5 7"><path d="M0.5 0.7L4.5 3.5L0.5 6.3Z" fill="none" stroke="#333" stroke-width="1"/></svg>
<svg style="left:823.5px;top:379.3px" width="11" height="11" viewBox="0 0 11 11"><path d="M0.5 3.5L3.5 0.5L6 3L3 6Z" fill="#d7973b"/><path d="M5 7.5L7.5 5L10 7.5L7.5 10Z" fill="#c27d1f"/><path d="M3.5 5L6 8" stroke="#b06d18" stroke-width="1.2"/></svg>
<span class="t" style="left:838.13px;top:380px;font-size:9.8px;line-height:9.8px;color:#1e1e1e;transform:scaleX(0.855);transform-origin:0 0;">_Pages_SupportAgent</span>
<svg style="left:782.5px;top:393.6px" width="5" height="7" viewBox="0 0 5 7"><path d="M0.5 0.7L4.5 3.5L0.5 6.3Z" fill="none" stroke="#333" stroke-width="1"/></svg>
<svg style="left:797.5px;top:392.6px" width="11" height="11" viewBox="0 0 11 11"><path d="M0.5 1H4L5 2H10.5V9.5H0.5Z" fill="#dcb67a"/></svg>
<span class="t" style="left:812.00px;top:394px;font-size:9.8px;line-height:9.8px;color:#1e1e1e;transform:scaleX(0.798);transform-origin:0 0;">Services</span>
<svg style="left:782.5px;top:406.8px" width="5" height="7" viewBox="0 0 5 7"><path d="M0.5 0.7L4.5 3.5L0.5 6.3Z" fill="none" stroke="#333" stroke-width="1"/></svg>
<svg style="left:797.5px;top:405.8px" width="11" height="11" viewBox="0 0 11 11"><path d="M5.2 4.2C4.8 3.6 4.3 3.4 3.6 3.4C2.5 3.4 1.6 4.3 1.6 5.5C1.6 6.7 2.5 7.6 3.6 7.6C4.3 7.6 4.8 7.4 5.2 6.8" fill="none" stroke="#388a34" stroke-width="1.4"/><path d="M6.6 4.2H9.6M6.6 6.2H9.6M7.3 3.4V7.2M8.9 3.4V7.2" stroke="#388a34" stroke-width="0.9"/></svg>
<span class="t" style="left:812.00px;top:407px;font-size:9.8px;line-height:9.8px;color:#1e1e1e;transform:scaleX(0.900);transform-origin:0 0;">AgentHub.cs</span>
<svg style="left:782.5px;top:420.0px" width="5" height="7" viewBox="0 0 5 7"><path d="M0.5 0.7L4.5 3.5L0.5 6.3Z" fill="none" stroke="#333" stroke-width="1"/></svg>
<svg style="left:797.5px;top:419.0px" width="11" height="11" viewBox="0 0 11 11"><path d="M3 8.5V2C3 1 4 0.5 5 0.5H10M8 0.5V8C8 9.5 7 10 6 10H3" fill="none" stroke="#1e1e1e" stroke-width="1"/><circle cx="2.3" cy="8.8" r="1.6" fill="#fff" stroke="#1e1e1e" stroke-width="1"/></svg>
<span class="t" style="left:812.00px;top:420px;font-size:9.8px;line-height:9.8px;color:#1e1e1e;transform:scaleX(0.890);transform-origin:0 0;">appsettings.json</span>
<svg style="left:782.5px;top:433.2px" width="5" height="7" viewBox="0 0 5 7"><path d="M0.5 0.7L4.5 3.5L0.5 6.3Z" fill="none" stroke="#333" stroke-width="1"/></svg>
<svg style="left:797.5px;top:432.2px" width="11" height="11" viewBox="0 0 11 11"><path d="M5.2 4.2C4.8 3.6 4.3 3.4 3.6 3.4C2.5 3.4 1.6 4.3 1.6 5.5C1.6 6.7 2.5 7.6 3.6 7.6C4.3 7.6 4.8 7.4 5.2 6.8" fill="none" stroke="#388a34" stroke-width="1.4"/><path d="M6.6 4.2H9.6M6.6 6.2H9.6M7.3 3.4V7.2M8.9 3.4V7.2" stroke="#388a34" stroke-width="0.9"/></svg>
<span class="t" style="left:812.00px;top:433px;font-size:9.8px;line-height:9.8px;color:#1e1e1e;transform:scaleX(0.879);transform-origin:0 0;">ChatHub.cs</span>
<svg style="left:782.5px;top:446.4px" width="5" height="7" viewBox="0 0 5 7"><path d="M0.5 0.7L4.5 3.5L0.5 6.3Z" fill="none" stroke="#333" stroke-width="1"/></svg>
<svg style="left:797.5px;top:445.4px" width="11" height="11" viewBox="0 0 11 11"><path d="M5.2 4.2C4.8 3.6 4.3 3.4 3.6 3.4C2.5 3.4 1.6 4.3 1.6 5.5C1.6 6.7 2.5 7.6 3.6 7.6C4.3 7.6 4.8 7.4 5.2 6.8" fill="none" stroke="#388a34" stroke-width="1.4"/><path d="M6.6 4.2H9.6M6.6 6.2H9.6M7.3 3.4V7.2M8.9 3.4V7.2" stroke="#388a34" stroke-width="0.9"/></svg>
<span class="t" style="left:812.00px;top:446px;font-size:9.8px;line-height:9.8px;color:#1e1e1e;transform:scaleX(0.878);transform-origin:0 0;">Program.cs</span>
<svg style="left:782.5px;top:459.7px" width="5" height="7" viewBox="0 0 5 7"><path d="M0.5 0.7L4.5 3.5L0.5 6.3Z" fill="none" stroke="#333" stroke-width="1"/></svg>
<svg style="left:797.5px;top:458.7px" width="11" height="11" viewBox="0 0 11 11"><path d="M5.2 4.2C4.8 3.6 4.3 3.4 3.6 3.4C2.5 3.4 1.6 4.3 1.6 5.5C1.6 6.7 2.5 7.6 3.6 7.6C4.3 7.6 4.8 7.4 5.2 6.8" fill="none" stroke="#388a34" stroke-width="1.4"/><path d="M6.6 4.2H9.6M6.6 6.2H9.6M7.3 3.4V7.2M8.9 3.4V7.2" stroke="#388a34" stroke-width="0.9"/></svg>
<span class="t" style="left:812.00px;top:460px;font-size:9.8px;line-height:9.8px;color:#1e1e1e;transform:scaleX(0.861);transform-origin:0 0;">Startup.cs</span>
<svg style="left:791px;top:462.7px" width="6" height="5" viewBox="0 0 6 5"><path d="M0.5 2.5L2 4.2L5.5 0.5" fill="none" stroke="#d00" stroke-width="1.3"/></svg>
<div style="left:760.2px;top:543px;width:74.8px;height:15.6px;background:#fbfbfb;border:1px solid #cccedb;border-top:none;box-sizing:border-box"></div>
<div style="left:761.2px;top:543px;width:72.8px;height:1px;background:#fbfbfb;"></div>
<span class="t" style="left:765.00px;top:546px;font-size:9.8px;line-height:9.8px;color:#1e7ac4;transform:scaleX(0.871);transform-origin:0 0;">Solution Explorer</span>
<span class="t" style="left:839.50px;top:546px;font-size:9.8px;line-height:9.8px;color:#444;transform:scaleX(0.855);transform-origin:0 0;">Team Explorer</span>
<div style="left:22px;top:546px;width:733.5px;height:13px;background:#f5f5f5;"></div>
<div style="left:22px;top:558.5px;width:733.5px;height:1px;background:#e0e0e6;"></div>
<div style="left:22.4px;top:546px;width:44px;height:12.5px;background:#fff;border:1px solid #d6d6dc;border-top:none;box-sizing:border-box"></div>
<span class="t" style="left:24.50px;top:549px;font-size:9.0px;line-height:9.0px;color:#1e1e1e;transform:scaleX(0.901);transform-origin:0 0;">100 %</span>
<svg style="left:60.5px;top:552.3px" width="4" height="2.4" viewBox="0 0 4 2.4"><path d="M0 0H4L2 2.4Z" fill="#555"/></svg>
<span class="t" style="left:22.00px;top:565px;font-size:9.8px;line-height:9.8px;color:#444;transform:scaleX(0.952);transform-origin:0 0;">Output</span>
<div style="left:22px;top:577.6px;width:28px;height:3.4px;background:#cfd0dc;"></div>
<span class="t" style="left:59.00px;top:565px;font-size:9.8px;line-height:9.8px;color:#444;transform:scaleX(0.909);transform-origin:0 0;">Web Publish Activity</span>
<div style="left:59px;top:577.6px;width:80px;height:3.4px;background:#cfd0dc;"></div>
<span class="t" style="left:148.00px;top:565px;font-size:9.8px;line-height:9.8px;color:#444;transform:scaleX(0.855);transform-origin:0 0;">Error List</span>
<div style="left:148px;top:577.6px;width:34px;height:3.4px;background:#cfd0dc;"></div>
<div style="left:0px;top:581.6px;width:1000px;height:15.6px;background:#007acc;"></div>
<div style="left:0px;top:597.2px;width:1000px;height:1.8px;background:#1d262b;"></div>
<svg style="left:2px;top:584.5px" width="12" height="10" viewBox="0 0 12 10"><path d="M3 0.7H11.3L9 9.3H0.7Z" fill="none" stroke="#fff" stroke-width="1.1"/></svg>
<span class="t" style="left:20.00px;top:586px;font-size:9.8px;line-height:9.8px;color:#fff;transform:scaleX(0.829);transform-origin:0 0;">Ready</span>
<span class="t" style="left:441.00px;top:586px;font-size:9.8px;line-height:9.8px;color:#fff;transform:scaleX(0.836);transform-origin:0 0;">Ln 74</span>
<span class="t" style="left:509.00px;top:586px;font-size:9.8px;line-height:9.8px;color:#fff;transform:scaleX(0.847);transform-origin:0 0;">Col 24</span>
<span class="t" style="left:576.50px;top:586px;font-size:9.8px;line-height:9.8px;color:#fff;transform:scaleX(0.845);transform-origin:0 0;">Ch 24</span>
<span class="t" style="left:676.60px;top:586px;font-size:9.8px;line-height:9.8px;color:#fff;transform:scaleX(0.820);transform-origin:0 0;">INS</span>
<svg style="left:767px;top:585.5px" width="8" height="9" viewBox="0 0 8 9"><path d="M4 9V1.5M0.8 4.5L4 1L7.2 4.5" fill="none" stroke="#fff" stroke-width="1.5"/></svg>
<span class="t" style="left:783.00px;top:586px;font-size:9.8px;line-height:9.8px;color:#fff;transform:scaleX(0.826);transform-origin:0 0;">2</span>
<svg style="left:804px;top:585.5px" width="9" height="9" viewBox="0 0 9 9"><path d="M1 8L2 5.5L6.5 1L8 2.5L3.5 7Z" fill="#fff"/></svg>
<span class="t" style="left:818.00px;top:586px;font-size:9.8px;line-height:9.8px;color:#fff;transform:scaleX(0.826);transform-origin:0 0;">2</span>
<svg style="left:838px;top:584px" width="12" height="12" viewBox="0 0 12 12"><path d="M6 0.3L11.7 6L6 11.7L0.3 6Z" fill="#fff"/><path d="M4 3.5L7.5 7M5 4.5V8.5M7.5 6V8" stroke="#007acc" stroke-width="0.9"/><circle cx="5" cy="8.5" r="0.9" fill="#007acc"/><circle cx="7.5" cy="7.8" r="0.9" fill="#007acc"/></svg>
<span class="t" style="left:855.00px;top:586px;font-size:9.8px;line-height:9.8px;color:#fff;transform:scaleX(0.884);transform-origin:0 0;">ExploreCalifornia</span>
<svg style="left:938px;top:584.5px" width="13" height="11" viewBox="0 0 13 11"><circle cx="2" cy="2" r="1.6" fill="#fff"/><circle cx="11" cy="2" r="1.6" fill="#fff"/><circle cx="6.5" cy="9.3" r="1.6" fill="#fff"/><path d="M2 2L6.5 6V9.3M11 2L6.5 6" fill="none" stroke="#fff" stroke-width="1.4"/></svg>
<span class="t" style="left:953.00px;top:586px;font-size:9.8px;line-height:9.8px;color:#fff;transform:scaleX(0.771);transform-origin:0 0;">04_03</span>
<svg style="left:978px;top:588.5px" width="7" height="4" viewBox="0 0 7 4"><path d="M0 4L3.5 0L7 4Z" fill="#fff"/></svg>
<svg style="left:860px;top:562px" width="135" height="26" viewBox="0 0 135 26"><text x="7.6" y="20.4" font-family="Liberation Sans" font-weight="bold" font-size="17.3" textLength="48.6" lengthAdjust="spacingAndGlyphs" fill="#fbfbfb" stroke="#a6a6aa" stroke-width="2" paint-order="stroke" stroke-linejoin="round">Linked</text><rect x="57.4" y="6.4" width="15.6" height="16.4" fill="#f0f0f2" stroke="#a6a6aa" stroke-width="1.5"/><rect x="58.6" y="7.6" width="13.2" height="14" fill="none" stroke="#fcfcfc" stroke-width="1.2"/><text x="60.2" y="20.4" font-family="Liberation Sans" font-weight="bold" font-size="15" textLength="10.5" lengthAdjust="spacingAndGlyphs" fill="#b8b8bc">in</text><text x="77" y="18" font-family="Liberation Sans" font-weight="bold" font-size="9.9" textLength="50.3" lengthAdjust="spacingAndGlyphs" fill="#f8f8fa" stroke="#b0b0b4" stroke-width="1.5" paint-order="stroke" stroke-linejoin="round">LEARNING</text></svg>
<svg style="left:984px;top:555px" width="11" height="13" viewBox="0 0 11 13"><path d="M1 0.5V11L3.5 8.5L5.5 12.5L7 11.8L5 8H9Z" fill="#111" stroke="#fff" stroke-width="0.7"/></svg>
</body></html>
